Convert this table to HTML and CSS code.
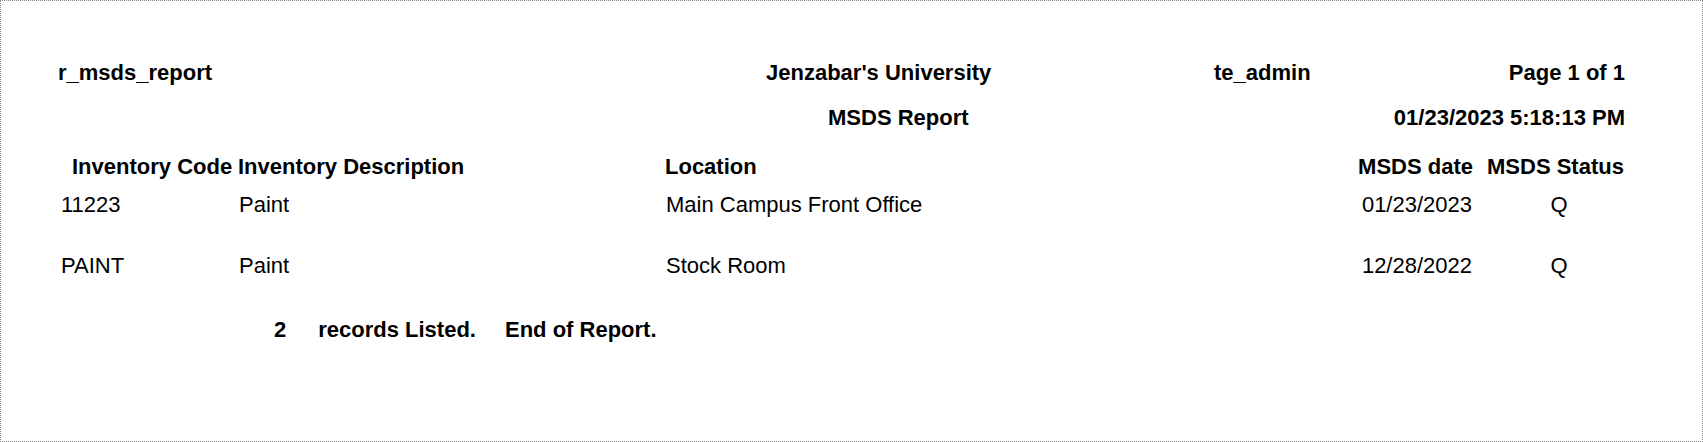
FILE: index.html
```html
<!DOCTYPE html>
<html lang="en">
<head>
<meta charset="utf-8">
<title>MSDS Report</title>
<link rel="stylesheet" href="styles.css">
</head>
<body>
<div class="page">
  <div class="report-head">
    <div class="b">r_msds_report</div>
    <div class="b">Jenzabar's University</div>
    <div class="b">te_admin</div>
    <div class="b right">Page 1 of 1</div>
    <div class="b title">MSDS Report</div>
    <div class="b right stamp">01/23/2023 5:18:13 PM</div>
  </div>

  <div class="table">
    <div class="row th">
      <div class="c1 h-code">Inventory Code</div>
      <div class="c2">Inventory Description</div>
      <div class="c3">Location</div>
      <div class="c4">MSDS date</div>
      <div class="c5">MSDS Status</div>
    </div>
    <div class="row td first">
      <div class="c1">11223</div>
      <div class="c2">Paint</div>
      <div class="c3">Main Campus Front Office</div>
      <div class="c4">01/23/2023</div>
      <div class="c5">Q</div>
    </div>
    <div class="row td second">
      <div class="c1">PAINT</div>
      <div class="c2">Paint</div>
      <div class="c3">Stock Room</div>
      <div class="c4">12/28/2022</div>
      <div class="c5">Q</div>
    </div>
  </div>

  <div class="footer b">
    <span class="count">2</span>
    <span class="listed">records Listed.</span>
    <span class="end">End of Report.</span>
  </div>
</div>
</body>
</html>
```

FILE: styles.css
```css
* { box-sizing: border-box; }
html, body { margin: 0; padding: 0; background: #fff; }
body {
  font-family: "Liberation Sans", Arial, sans-serif;
  font-size: 22px;
  line-height: 25px;
  color: #000;
}
.page {
  width: 1703px;
  height: 442px;
  border: 1px dotted #8a8a8a;
  padding: 59px 0 0 57px;
}
.b { font-weight: bold; }
.right { text-align: right; }

.report-head {
  width: 1567px;
  display: grid;
  grid-template-columns: 708px 448px 1fr auto;
  row-gap: 20px;
  white-space: nowrap;
}
.title { grid-column: 2; padding-left: 62px; }
.stamp { grid-column: 3 / 5; }

.table { margin-top: 24px; white-space: nowrap; }
.row {
  display: grid;
  grid-template-columns: 180px 426px 689px 120px 150px;
}
.th { font-weight: bold; }
.first { margin-top: 13px; }
.second { margin-top: 36px; }
.h-code { padding-left: 14px; }
.th .c3 { padding-left: 1px; }
.c4 { text-align: right; }
.c5 { text-align: center; padding-left: 14px; }
.td .c1 { padding-left: 3px; }
.td .c2 { padding-left: 1px; }
.td .c3 { padding-left: 2px; }
.td .c4 { padding-right: 1px; }
.td .c5 { padding-left: 22px; }

.footer {
  margin-top: 39px;
  padding-left: 216px;
  display: flex;
  white-space: nowrap;
}
.listed { margin-left: 32px; }
.end { margin-left: 29px; }
```
